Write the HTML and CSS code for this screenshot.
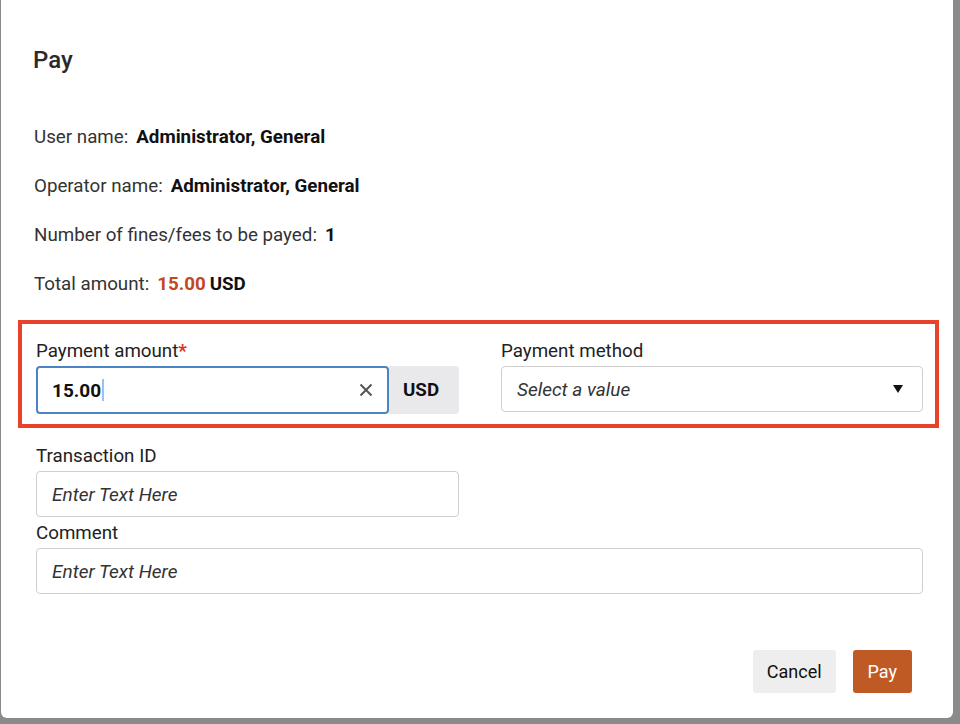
FILE: index.html
```html
<!DOCTYPE html>
<html>
<head>
<meta charset="utf-8">
<link rel="stylesheet" href="styles.css">
</head>
<body>
<div class="modal">
  <div class="header"><h1 class="title">Pay</h1></div>
  <div class="info">
    <div class="info-row"><span class="info-label">User name:</span><span class="info-value">Administrator, General</span></div>
    <div class="info-row"><span class="info-label">Operator name:</span><span class="info-value">Administrator, General</span></div>
    <div class="info-row"><span class="info-label">Number of fines/fees to be payed:</span><span class="info-value">1</span></div>
    <div class="info-row"><span class="info-label">Total amount:</span><span class="info-value"><span class="amount">15.00</span><span class="currency">USD</span></span></div>
  </div>
  <div class="highlight">
    <div class="field col">
      <div class="label">Payment amount<span class="req">*</span></div>
      <div class="group">
        <div class="control focused">
          <span class="value">15.00</span><span class="caret"></span>
          <svg class="clear" width="14" height="14" viewBox="0 0 14 14"><path d="M1.5 1.5L12.5 12.5M12.5 1.5L1.5 12.5" stroke="#555" stroke-width="2" fill="none"/></svg>
        </div>
        <div class="addon">USD</div>
      </div>
    </div>
    <div class="field col">
      <div class="label">Payment method</div>
      <div class="control select">
        <span class="placeholder">Select a value</span>
        <svg class="arrow" width="10" height="8" viewBox="0 0 10 8"><path d="M0 0H10L5 8Z" fill="#111"/></svg>
      </div>
    </div>
  </div>
  <div class="fields">
    <div class="field narrow">
      <div class="label">Transaction ID</div>
      <div class="control"><span class="placeholder">Enter Text Here</span></div>
    </div>
    <div class="field wide">
      <div class="label">Comment</div>
      <div class="control"><span class="placeholder">Enter Text Here</span></div>
    </div>
  </div>
  <div class="footer">
    <button class="btn btn-cancel">Cancel</button>
    <button class="btn btn-pay">Pay</button>
  </div>
</div>
</body>
</html>
```
FILE: styles.css
```css
html, body {
  margin: 0;
  padding: 0;
}
body {
  background: #8a8a8a;
  width: 960px;
  height: 724px;
  overflow: hidden;
  font-family: Roboto, "Liberation Sans", sans-serif;
  color: #222;
}
.modal {
  margin-left: 1px;
  width: 952px;
  height: 718px;
  background: #fff;
  border-radius: 0 0 6px 6px;
  display: flex;
  flex-direction: column;
}
.header {
  padding: 46px 0 0 32px;
}
.title {
  margin: 0;
  font-size: 24px;
  line-height: 28px;
  font-weight: 500;
  color: #2a2a2a;
}
.info {
  padding: 52px 0 0 33px;
  display: flex;
  flex-direction: column;
  gap: 27px;
}
.info-row {
  font-size: 18.75px;
  line-height: 22px;
  color: #333;
  display: flex;
  gap: 8px;
}
.info-value {
  font-weight: 700;
  color: #111;
}
.amount {
  color: #c2481f;
  margin-right: 4px;
}
.highlight {
  margin: 25px 0 0 17px;
  width: 921px;
  height: 108px;
  box-sizing: border-box;
  border: 4px solid #e8412c;
  padding: 16px 12px 0 14px;
  display: flex;
  gap: 42px;
}
.col {
  width: 423px;
}
.col + .col {
  width: 422px;
}
.label {
  font-size: 18.75px;
  line-height: 22px;
  color: #222;
  margin-bottom: 4px;
}
.req {
  color: #e0301e;
  font-weight: 700;
}
.group {
  display: flex;
}
.control {
  box-sizing: border-box;
  height: 46px;
  border: 1px solid #cfcfcf;
  border-radius: 4px;
  display: flex;
  align-items: center;
  padding: 0 15px;
  font-size: 19px;
  background: #fff;
}
.control.focused {
  width: 353px;
  height: 48px;
  border: 2px solid #4a84c4;
  padding: 0 14px;
}
.value {
  font-weight: 700;
  color: #111;
}
.caret {
  width: 2px;
  height: 22px;
  background: #9cc0f0;
  margin-left: 1px;
}
.clear {
  margin-left: auto;
  margin-right: 0;
}
.addon {
  box-sizing: border-box;
  width: 70px;
  height: 48px;
  background: #e9e9eb;
  border-radius: 0 4px 4px 0;
  display: flex;
  align-items: center;
  padding-left: 14px;
  font-size: 18.75px;
  font-weight: 700;
  color: #111;
}
.select {
  margin-top: 1px;
}
.placeholder {
  font-style: italic;
  color: #333;
}
.arrow {
  margin-left: auto;
  margin-right: 4px;
}
.fields {
  padding: 17px 0 0 35px;
  display: flex;
  flex-direction: column;
  gap: 5px;
}
.narrow {
  width: 423px;
}
.wide {
  width: 887px;
}
.footer {
  margin-top: 56px;
  display: flex;
  justify-content: flex-end;
  gap: 17px;
  padding-right: 41px;
}
.btn {
  height: 43px;
  border: none;
  border-radius: 3px;
  font-family: Roboto, "Liberation Sans", sans-serif;
  font-size: 18px;
  padding: 0 14px;
}
.btn-cancel {
  background: #eeeeee;
  color: #111;
}
.btn-pay {
  background: #bf5a24;
  color: #fff;
  padding: 0 15px;
}
```
